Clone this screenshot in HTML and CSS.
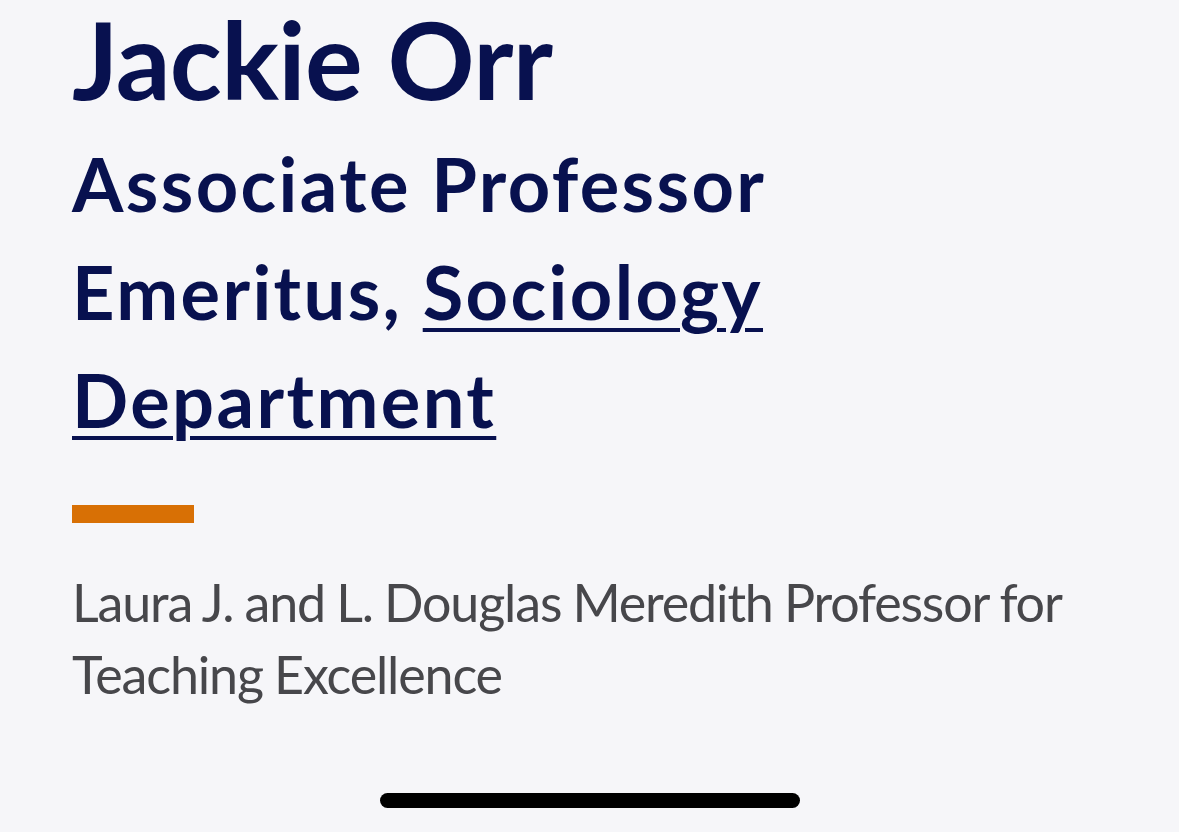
FILE: index.html
```html
<!DOCTYPE html>
<html lang="en">
<head>
<meta charset="utf-8">
<title>Jackie Orr</title>
<link rel="stylesheet" href="styles.css">
</head>
<body>
<main class="profile">
  <h1 class="name">Jackie Orr</h1>
  <h2 class="title">Associate Professor Emeritus, <a class="dept" href="#">Sociology Department</a></h2>
  <div class="accent"></div>
  <p class="honor">Laura J. and L. Douglas Meredith Professor for Teaching Excellence</p>
</main>
<div class="home-indicator"></div>
</body>
</html>
```
FILE: styles.css
```css
html, body {
  margin: 0;
  padding: 0;
  background: #f6f6f9;
  height: 100%;
  overflow: hidden;
}
body {
  font-family: "Lato", "Noto Sans", sans-serif;
}
.profile {
  padding: 0 0 0 72px;
  display: flex;
  flex-direction: column;
  align-items: flex-start;
}
.name {
  margin: 0;
  font-size: 108px;
  line-height: 116px;
  font-weight: 700;
  letter-spacing: -0.7px;
  color: #08114f;
}
.title {
  margin: 14px 0 0;
  max-width: 760px;
  font-size: 74px;
  line-height: 108px;
  font-weight: 700;
  letter-spacing: 2.4px;
  color: #08114f;
}
.dept {
  color: #08114f;
  text-decoration: underline;
  text-decoration-thickness: 4px;
  text-underline-offset: 8px;
}
.accent {
  margin-top: 51px;
  width: 122px;
  height: 18px;
  background: #d87005;
}
.honor {
  margin: 43px 0 0;
  max-width: 1020px;
  font-size: 52px;
  line-height: 72px;
  font-weight: 400;
  letter-spacing: -1.15px;
  word-spacing: -1px;
  color: #47474b;
}
.home-indicator {
  position: fixed;
  left: 380px;
  top: 793px;
  width: 420px;
  height: 15px;
  border-radius: 8px;
  background: #000;
}
```
